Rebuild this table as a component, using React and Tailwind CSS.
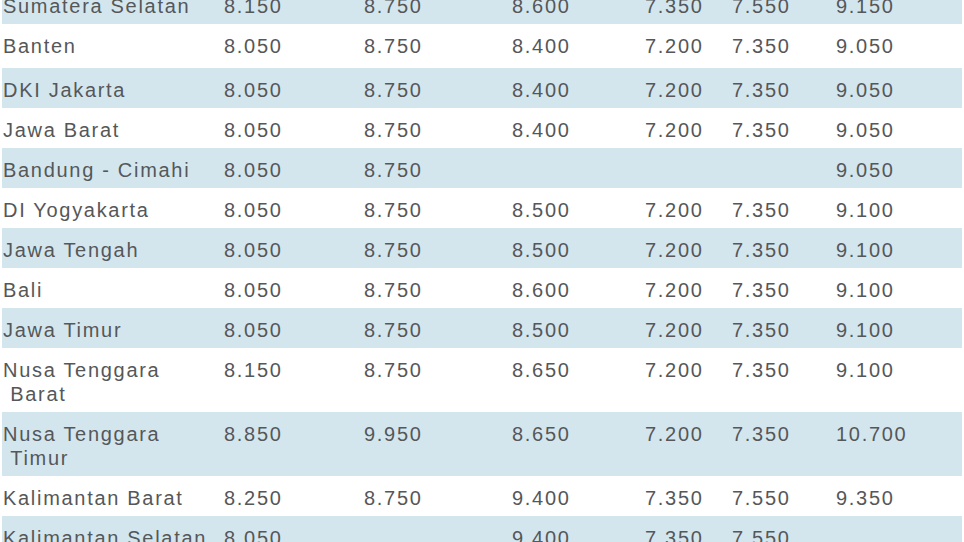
const rows = [
  ["Sumatera Selatan", "8.150", "8.750", "8.600", "7.350", "7.550", "9.150"],
  ["Banten", "8.050", "8.750", "8.400", "7.200", "7.350", "9.050"],
  ["DKI Jakarta", "8.050", "8.750", "8.400", "7.200", "7.350", "9.050"],
  ["Jawa Barat", "8.050", "8.750", "8.400", "7.200", "7.350", "9.050"],
  ["Bandung - Cimahi", "8.050", "8.750", "", "", "", "9.050"],
  ["DI Yogyakarta", "8.050", "8.750", "8.500", "7.200", "7.350", "9.100"],
  ["Jawa Tengah", "8.050", "8.750", "8.500", "7.200", "7.350", "9.100"],
  ["Bali", "8.050", "8.750", "8.600", "7.200", "7.350", "9.100"],
  ["Jawa Timur", "8.050", "8.750", "8.500", "7.200", "7.350", "9.100"],
  [["Nusa Tenggara", "Barat"], "8.150", "8.750", "8.650", "7.200", "7.350", "9.100"],
  [["Nusa Tenggara", "Timur"], "8.850", "9.950", "8.650", "7.200", "7.350", "10.700"],
  ["Kalimantan Barat", "8.250", "8.750", "9.400", "7.350", "7.550", "9.350"],
  ["Kalimantan Selatan", "8.050", "", "9.400", "7.350", "7.550", ""],
];

const App = () => {
  return (
    <div className="bg-white h-[542px] overflow-hidden px-[2px]">
      <table
        className="w-[960px] table-fixed -mt-4 text-[20px] leading-6 tracking-[1.7px] text-[#555759]"
        style={{ fontFamily: '"Liberation Sans", Arial, sans-serif' }}
      >
        <colgroup>
          <col className="w-[221px]" />
          <col className="w-[140px]" />
          <col className="w-[148px]" />
          <col className="w-[133px]" />
          <col className="w-[87px]" />
          <col className="w-[104px]" />
          <col className="w-[127px]" />
        </colgroup>
        <tbody>
          {rows.map((row, i) => (
            <tr key={i} className={i % 2 === 0 ? "bg-[#d3e6ee]" : "bg-white"}>
              {row.map((cell, j) => (
                <td
                  key={j}
                  className={`align-top pl-px pt-[10px] whitespace-nowrap ${
                    i === 1 ? "pb-[10px]" : "pb-[6px]"
                  }`}
                >
                  {Array.isArray(cell) ? (
                    <>
                      {cell[0]}
                      <br />
                      {"\u00a0" + cell[1]}
                    </>
                  ) : (
                    cell
                  )}
                </td>
              ))}
            </tr>
          ))}
        </tbody>
      </table>
    </div>
  );
};

export default App;
